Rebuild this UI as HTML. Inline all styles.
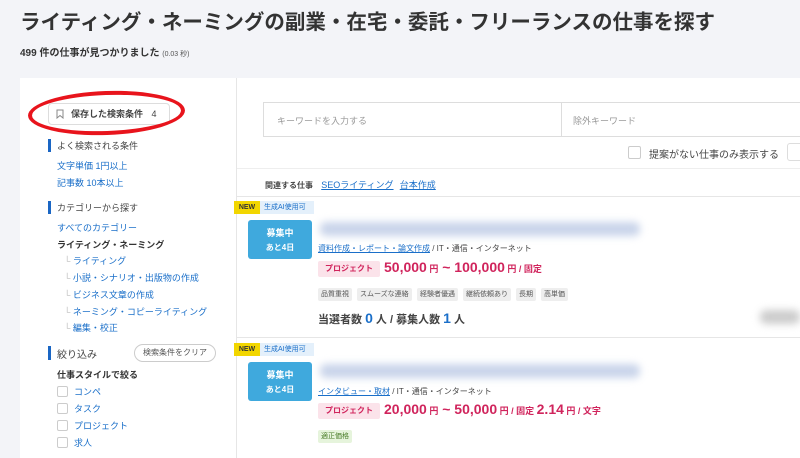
<!DOCTYPE html>
<html><head><meta charset="utf-8"><style>
*{margin:0;padding:0;box-sizing:border-box}
body{width:800px;height:450px;overflow:hidden;background:#f3f4f8;font-family:"Liberation Sans","Noto Sans CJK JP",sans-serif;color:#333;position:relative}
.a{position:absolute;white-space:nowrap}
.lk{color:#1a6fc9}
.bar{position:absolute;width:3px;height:13px;background:#1a66c4}
.tag{position:absolute;height:13px;background:#eee;color:#555;font-size:7px;line-height:13px;padding:0 3px;border-radius:2px}
.cb{position:absolute;width:11px;height:11px;border:1px solid #ccc;border-radius:2px;background:#fff}
.blur{position:absolute;background:#c9d4ea;filter:blur(4px);border-radius:6px}
</style></head><body>
<div class="a" style="left:20px;top:5px;font-size:20.5px;font-weight:bold;color:#333">ライティング・ネーミングの副業・在宅・委託・フリーランスの仕事を探す</div>
<div class="a" style="left:20px;top:44px;font-size:10px;font-weight:bold">499 件の仕事が見つかりました <span style="font-weight:normal;font-size:7px;color:#555">(0.03 秒)</span></div>
<div class="a" style="left:20px;top:78px;width:780px;height:380px;background:#fff"></div>
<div class="a" style="left:236px;top:78px;width:1px;height:380px;background:#e6e6e6"></div>
<!-- sidebar -->
<div class="a" style="left:48px;top:103px;width:122px;height:22px;border:1px solid #ddd;border-radius:4px;font-size:9px;font-weight:bold;color:#444;line-height:20px;padding-left:22px">保存した検索条件 <span style="font-weight:normal;margin-left:6px">4</span></div>
<svg class="a" style="left:56px;top:109px" width="8" height="10"><path d="M1 1h6v8L4 6.5 1 9z" fill="none" stroke="#888" stroke-width="1"/></svg>
<div class="a" style="left:28px;top:91px;width:157px;height:44px;border:4px solid #e8141c;border-radius:50%;transform:rotate(-2deg)"></div>
<div class="bar" style="left:48px;top:139px"></div>
<div class="a" style="left:57px;top:139px;font-size:9px;color:#444">よく検索される条件</div>
<div class="a lk" style="left:57px;top:159px;font-size:9px">文字単価 1円以上</div>
<div class="a lk" style="left:57px;top:176px;font-size:9px">記事数 10本以上</div>
<div class="bar" style="left:48px;top:201px"></div>
<div class="a" style="left:57px;top:201px;font-size:9px;color:#444">カテゴリーから探す</div>
<div class="a lk" style="left:57px;top:221px;font-size:9px">すべてのカテゴリー</div>
<div class="a" style="left:57px;top:238px;font-size:9px;font-weight:bold">ライティング・ネーミング</div>
<div class="a" style="left:64px;top:254px;font-size:9px"><span style="color:#bbb">└ </span><span class="lk">ライティング</span></div>
<div class="a" style="left:64px;top:271px;font-size:9px"><span style="color:#bbb">└ </span><span class="lk">小説・シナリオ・出版物の作成</span></div>
<div class="a" style="left:64px;top:288px;font-size:9px"><span style="color:#bbb">└ </span><span class="lk">ビジネス文章の作成</span></div>
<div class="a" style="left:64px;top:305px;font-size:9px"><span style="color:#bbb">└ </span><span class="lk">ネーミング・コピーライティング</span></div>
<div class="a" style="left:64px;top:321px;font-size:9px"><span style="color:#bbb">└ </span><span class="lk">編集・校正</span></div>
<div class="bar" style="left:48px;top:346px;height:14px"></div>
<div class="a" style="left:57px;top:346px;font-size:10px;color:#444">絞り込み</div>
<div class="a" style="left:134px;top:344px;width:82px;height:18px;border:1px solid #ccc;border-radius:9px;font-size:8px;color:#555;text-align:center;line-height:16px">検索条件をクリア</div>
<div class="a" style="left:57px;top:368px;font-size:9px;font-weight:bold">仕事スタイルで絞る</div>
<div class="cb" style="left:57px;top:386px"></div><div class="a lk" style="left:74px;top:385px;font-size:9px">コンペ</div>
<div class="cb" style="left:57px;top:403px"></div><div class="a lk" style="left:74px;top:402px;font-size:9px">タスク</div>
<div class="cb" style="left:57px;top:420px"></div><div class="a lk" style="left:74px;top:419px;font-size:9px">プロジェクト</div>
<div class="cb" style="left:57px;top:437px"></div><div class="a lk" style="left:74px;top:436px;font-size:9px">求人</div>
<!-- search -->
<div class="a" style="left:263px;top:102px;width:540px;height:35px;border:1px solid #ddd"></div>
<div class="a" style="left:561px;top:102px;width:1px;height:35px;background:#ddd"></div>
<div class="a" style="left:277px;top:114px;font-size:9px;color:#999">キーワードを入力する</div>
<div class="a" style="left:573px;top:114px;font-size:9px;color:#999">除外キーワード</div>
<div class="a" style="left:628px;top:146px;width:13px;height:13px;border:1px solid #ccc;border-radius:2px"></div>
<div class="a" style="left:649px;top:146px;font-size:10px;color:#444">提案がない仕事のみ表示する</div>
<div class="a" style="left:787px;top:143px;width:20px;height:18px;border:1px solid #ddd;border-radius:3px"></div>
<div class="a" style="left:237px;top:168px;width:563px;height:1px;background:#eee"></div>
<div class="a" style="left:265px;top:178px;font-size:8px;font-weight:bold;color:#444">関連する仕事 <span class="lk" style="font-weight:normal;text-decoration:underline;margin-left:6px;font-size:9px">SEOライティング</span> <span class="lk" style="font-weight:normal;text-decoration:underline;margin-left:4px;font-size:9px">台本作成</span></div>
<div class="a" style="left:237px;top:196px;width:563px;height:1px;background:#e6e6e6"></div>
<!-- card 1 -->
<div class="a" style="left:234px;top:201px;width:26px;height:13px;background:#f2d600;font-size:7px;font-weight:bold;line-height:13px;text-align:center;color:#333">NEW</div>
<div class="a" style="left:260px;top:201px;width:54px;height:13px;background:#e4f0fb;font-size:7px;color:#1a6fc9;line-height:13px;padding-left:4px">生成AI使用可</div>
<div class="a" style="left:248px;top:220px;width:64px;height:39px;background:#3fa9dd;border-radius:3px;color:#fff;text-align:center;font-weight:bold;font-size:9px;padding-top:6px;line-height:14px">募集中<br><span style="font-size:8px">あと4日</span></div>
<div class="blur" style="left:320px;top:222px;width:320px;height:14px"></div>
<div class="a" style="left:318px;top:243px;font-size:8px;color:#444"><span class="lk" style="text-decoration:underline">資料作成・レポート・論文作成</span> / IT・通信・インターネット</div>
<div class="a" style="left:318px;top:261px;width:62px;height:16px;background:#fbe3ea;color:#d0245c;font-size:8px;font-weight:bold;text-align:center;line-height:16px;border-radius:2px">プロジェクト</div>
<div class="a" style="left:384px;top:259px;font-size:14px;font-weight:bold;color:#d0245c">50,000<span style="font-size:9px"> 円</span> ~ 100,000<span style="font-size:9px"> 円 / 固定</span></div>
<div class="tag" style="left:318px;top:288px">品質重視</div>
<div class="tag" style="left:357px;top:288px">スムーズな連絡</div>
<div class="tag" style="left:417px;top:288px">経験者優遇</div>
<div class="tag" style="left:463px;top:288px">継続依頼あり</div>
<div class="tag" style="left:516px;top:288px">長期</div>
<div class="tag" style="left:541px;top:288px">高単価</div>
<div class="a" style="left:318px;top:310px;font-size:11px;font-weight:bold;color:#444">当選者数 <span style="color:#1a6fc9;font-size:14px">0</span> 人 / 募集人数 <span style="color:#1a6fc9;font-size:14px">1</span> 人</div>
<div class="blur" style="left:760px;top:310px;width:40px;height:14px;background:#ccc"></div>
<div class="a" style="left:237px;top:337px;width:563px;height:1px;background:#e6e6e6"></div>
<!-- card 2 -->
<div class="a" style="left:234px;top:343px;width:26px;height:13px;background:#f2d600;font-size:7px;font-weight:bold;line-height:13px;text-align:center;color:#333">NEW</div>
<div class="a" style="left:260px;top:343px;width:54px;height:13px;background:#e4f0fb;font-size:7px;color:#1a6fc9;line-height:13px;padding-left:4px">生成AI使用可</div>
<div class="a" style="left:248px;top:362px;width:64px;height:39px;background:#3fa9dd;border-radius:3px;color:#fff;text-align:center;font-weight:bold;font-size:9px;padding-top:6px;line-height:14px">募集中<br><span style="font-size:8px">あと4日</span></div>
<div class="blur" style="left:320px;top:364px;width:320px;height:14px"></div>
<div class="a" style="left:318px;top:386px;font-size:8px;color:#444"><span class="lk" style="text-decoration:underline">インタビュー・取材</span> / IT・通信・インターネット</div>
<div class="a" style="left:318px;top:403px;width:62px;height:16px;background:#fbe3ea;color:#d0245c;font-size:8px;font-weight:bold;text-align:center;line-height:16px;border-radius:2px">プロジェクト</div>
<div class="a" style="left:384px;top:401px;font-size:14px;font-weight:bold;color:#d0245c">20,000<span style="font-size:9px"> 円</span> ~ 50,000<span style="font-size:9px"> 円 / 固定 </span>2.14<span style="font-size:9px"> 円 / 文字</span></div>
<div class="tag" style="left:318px;top:430px;background:#e6f4dc;color:#4a7d2a">適正価格</div>
</body></html>
